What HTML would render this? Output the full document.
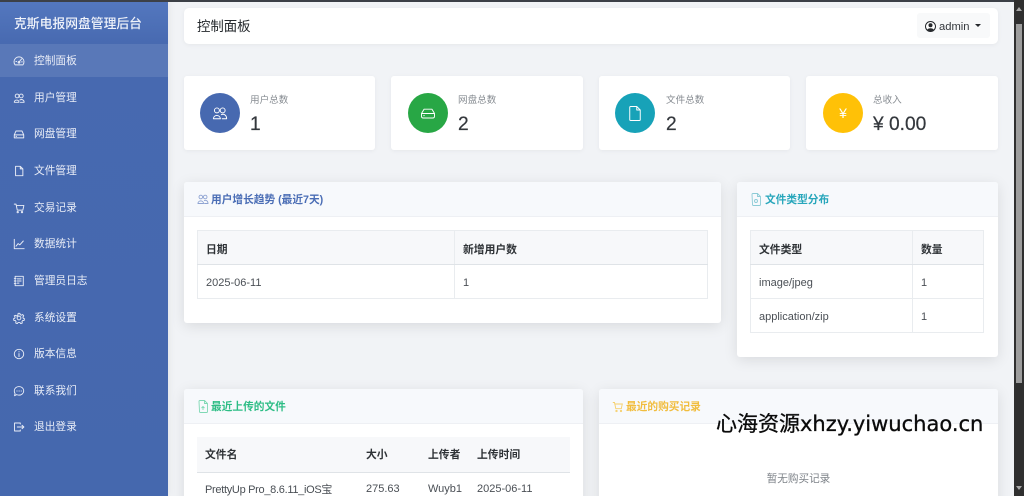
<!DOCTYPE html>
<html lang="zh">
<head>
<meta charset="utf-8">
<title>控制面板</title>
<style>
*{box-sizing:border-box}
html,body{margin:0;padding:0;width:1024px;height:496px;overflow:hidden;background:#f1f3f6}
body{font-family:"Liberation Sans","Noto Sans CJK SC",sans-serif;font-size:11.2px;color:#3d4248;position:relative}
#w{position:absolute;left:0;top:0;width:1024px;height:496px;overflow:hidden;background:#f1f3f6;filter:blur(.3px)}
.a{position:absolute}
.topline{left:0;top:0;width:1024px;height:2px;background:#3c4047;z-index:9}
.side{left:0;top:0;width:168px;height:496px;background:linear-gradient(180deg,#5478bf 0,#4769b0 45px,#4568ae 100%);box-shadow:0 0 8px rgba(0,0,0,.08)}
.brand{left:14px;top:15px;font-size:12.8px;line-height:18px;color:#f0f3fa;font-weight:500;white-space:nowrap}
.active{left:0;top:44px;width:168px;height:33px;background:rgba(255,255,255,.1)}
.nav{left:34px;font-size:10.7px;line-height:14px;color:#e9edf7;white-space:nowrap}
.ni{left:13px;width:12px;height:12px;fill:none;stroke:#e9edf7;stroke-width:1.1;stroke-linecap:round;stroke-linejoin:round}
.card{background:#fff;border-radius:3px;box-shadow:0 1px 5px rgba(0,0,0,.05)}
.panel{background:#fff;border-radius:3px;box-shadow:0 3px 14px rgba(0,0,0,.1);overflow:hidden}
.ph{left:0;top:0;right:0;height:35px;background:#f7f9fc;border-bottom:1px solid #eef0f4}
.pt{font-size:10.7px;line-height:14px;font-weight:700;white-space:nowrap}
.circ{width:40px;height:40px;border-radius:50%;top:93px}
.lab{top:95px;font-size:9.6px;line-height:12px;color:#878c92;white-space:nowrap}
.num{top:112px;font-size:19.2px;line-height:25px;color:#33373c;white-space:nowrap;-webkit-text-stroke:.2px #33373c}
table{border-collapse:collapse;position:absolute;table-layout:fixed;font-size:11px;color:#4a4f55}
td,th{border:1px solid #e9ecef;padding:2px 8px 0;text-align:left;white-space:nowrap;overflow:hidden;height:34px}
th{background:#f7f8fa;color:#2e3236;font-weight:700;font-size:10.8px;border-bottom:1px solid #dfe3e7}
.plain td,.plain th{border-left:0;border-right:0;border-top:0;padding-top:0}
.ic{fill:none;stroke:#fff;stroke-width:1.1;stroke-linecap:round;stroke-linejoin:round}
.sb{left:1014px;top:0;width:10px;height:496px;background:#2f2f2f;z-index:10}
.wm{left:716px;top:411px;font-size:21px;line-height:26px;color:#0b0b0b;white-space:nowrap;z-index:8;font-family:"DejaVu Sans","Noto Sans CJK SC",sans-serif;-webkit-text-stroke:.3px #0b0b0b}
</style>
</head>
<body>
<div id="w">
<div class="a topline"></div>

<div class="a side"></div>
<div class="a active"></div>
<div class="a brand">克斯电报网盘管理后台</div>

<svg class="a ni" style="top:55px" viewBox="0 0 14 14"><path d="M2.400 11.500A5.800 5.800 0 1 1 11.600 11.500ZM7 8.200 10 4.600M3.400 7.600h.8M10 8h.8"/><circle cx="7" cy="8.500" r="1"/></svg>
<div class="a nav" style="top:54px">控制面板</div>
<svg class="a ni" style="top:92px" viewBox="0 0 14 14"><circle cx="4.800" cy="4.600" r="2.200"/><circle cx="9.600" cy="4.600" r="2.200"/><path d="M1.500 12c0-3.500 5.500-3.500 5.500 0ZM8 9.400c2-1.300 5-.4 5 2.600H8.600"/></svg>
<div class="a nav" style="top:91px">用户管理</div>
<svg class="a ni" style="top:128px" viewBox="0 0 14 14"><path d="M1.500 8 3.500 3.500h7L12.500 8M1.500 8h11v3.500h-11ZM3.500 9.800h.6"/></svg>
<div class="a nav" style="top:127px">网盘管理</div>
<svg class="a ni" style="top:165px" viewBox="0 0 14 14"><path d="M3 1.500h5.500L11.500 4.500v8H3ZM8.500 1.500v3h3"/></svg>
<div class="a nav" style="top:164px">文件管理</div>
<svg class="a ni" style="top:202px" viewBox="0 0 14 14"><path d="M1.500 2.500h2l1.500 7h6.500l1.200-5.500H4"/><circle cx="5.500" cy="11.800" r=".8"/><circle cx="10.500" cy="11.800" r=".8"/></svg>
<div class="a nav" style="top:201px">交易记录</div>
<svg class="a ni" style="top:238px" viewBox="0 0 14 14"><path d="M1.500 1.500v11h11.500M3.500 9.500 6 6.500l2 1.500 4-4.500"/></svg>
<div class="a nav" style="top:237px">数据统计</div>
<svg class="a ni" style="top:275px" viewBox="0 0 14 14"><path d="M2.500 1.500h9.500v11H2.500ZM5 4.500h4.500M5 7h4.500M5 9.500h2M1.500 4h2M1.500 7h2M1.500 10h2"/></svg>
<div class="a nav" style="top:274px">管理员日志</div>
<svg class="a ni" style="top:312px" viewBox="0 0 14 14"><circle cx="7" cy="7" r="2.200"/><path d="M6 1.500h2l.4 1.600 1.500.6 1.400-.8 1.200 1.500-.9 1.400.3 1.400 1.500.7-.4 1.900-1.700.1-.9 1.300.5 1.600-1.800.8-1-1.300H5.900l-1 1.300-1.800-.8.500-1.600-.9-1.300-1.700-.1-.4-1.900 1.500-.7.300-1.400-.9-1.400L3.100 3.900l1.400.8 1.100-.6Z"/></svg>
<div class="a nav" style="top:311px">系统设置</div>
<svg class="a ni" style="top:348px" viewBox="0 0 14 14"><circle cx="7" cy="7" r="5.500"/><path d="M7 6.500v3.500M7 4.200v.3"/></svg>
<div class="a nav" style="top:347px">版本信息</div>
<svg class="a ni" style="top:385px" viewBox="0 0 14 14"><path d="M7 1.800c3.200 0 5.500 2.200 5.500 5s-2.300 5-5.500 5c-1 0-1.900-.2-2.600-.6L1.800 12.500l.6-2.600C1.800 9 1.500 8 1.500 6.800c0-2.800 2.300-5 5.500-5ZM4.500 7h.3M7 7h.3M9.500 7h.3"/></svg>
<div class="a nav" style="top:384px">联系我们</div>
<svg class="a ni" style="top:421px" viewBox="0 0 14 14"><path d="M8.500 3.500v-1.200H1.800v9.400h6.700v-1.200M5 7h7.500M10.500 5l2.200 2-2.200 2"/></svg>
<div class="a nav" style="top:420px">退出登录</div>

<!-- header -->
<div class="a card" style="left:184px;top:8px;width:814px;height:36px;border-radius:5px"></div>
<div class="a" style="left:197px;top:18px;font-size:13.4px;line-height:18px;color:#24282c;white-space:nowrap">控制面板</div>
<div class="a" style="left:917px;top:13px;width:73px;height:25px;background:#f8f9fa;border-radius:3px"></div>
<svg class="a" style="left:925px;top:21px;width:11px;height:11px" viewBox="0 0 11 11"><circle cx="5.500" cy="5.500" r="5" fill="#fff" stroke="#25282c" stroke-width="1"/><circle cx="5.500" cy="4.200" r="2" fill="#25282c"/><path d="M2.200 8.800C3 6.800 8 6.800 8.800 8.800 7.500 10.600 3.500 10.600 2.200 8.800Z" fill="#25282c"/></svg>
<div class="a" style="left:939px;top:20px;font-size:11.2px;line-height:14px;color:#33373c;white-space:nowrap">admin</div>
<div class="a" style="left:975px;top:24px;width:0;height:0;border-left:3.500px solid transparent;border-right:3.500px solid transparent;border-top:3.500px solid #25282c"></div>

<!-- stat cards -->
<div class="a card" style="left:184px;top:76px;width:191px;height:74px"></div>
<div class="a card" style="left:391px;top:76px;width:192px;height:74px"></div>
<div class="a card" style="left:599px;top:76px;width:191px;height:74px"></div>
<div class="a card" style="left:806px;top:76px;width:192px;height:74px"></div>

<div class="a circ" style="left:200px;background:#4769b0"></div>
<svg class="a ic" style="left:212px;top:106px;width:16px;height:15px" viewBox="0 0 18 17"><circle cx="5.500" cy="5" r="2.800"/><circle cx="12" cy="5" r="2.800"/><path d="M1.500 14.500c.2-5 7.500-5 8 0ZM10.500 9.800c2.500-1 6-.2 6 4.700h-5"/></svg>
<div class="a lab" style="left:250px">用户总数</div>
<div class="a num" style="left:250px">1</div>

<div class="a circ" style="left:408px;background:#28a745"></div>
<svg class="a ic" style="left:420px;top:107px;width:16px;height:13px" viewBox="0 0 18 15"><path d="M1.500 7.500 4.500 2.500h9l3 5M1.500 7.500h15v3.200q0 2-2 2h-11q-2 0-2-2ZM4 10h.8"/></svg>
<div class="a lab" style="left:458px">网盘总数</div>
<div class="a num" style="left:458px">2</div>

<div class="a circ" style="left:615px;background:#17a2b8"></div>
<svg class="a ic" style="left:628px;top:105px;width:14px;height:17px" viewBox="0 0 16 19"><path d="M2 2.500q0-1 1-1h7L14 5.500v11q0 1-1 1H3q-1 0-1-1ZM10 1.500v4h4"/></svg>
<div class="a lab" style="left:666px">文件总数</div>
<div class="a num" style="left:666px">2</div>

<div class="a circ" style="left:823px;background:#ffc107"></div>
<div class="a" style="left:823px;top:104px;width:40px;text-align:center;font-size:14px;line-height:18px;color:#fff">¥</div>
<div class="a lab" style="left:873px">总收入</div>
<div class="a num" style="left:873px">¥ 0.00</div>

<!-- growth panel -->
<div class="a panel" style="left:184px;top:182px;width:537px;height:141px">
  <div class="a ph"></div>
  <svg class="a" style="left:13px;top:12px;width:12px;height:11px;fill:none;stroke:#8ea3d2;stroke-width:.9" viewBox="0 0 12 11"><circle cx="3.800" cy="3" r="1.800"/><circle cx="8.200" cy="3" r="1.800"/><path d="M1 9.500c0-3.500 5.500-3.500 5.500 0ZM7 6.600c2-.8 4 .2 4 2.900H7.200"/></svg>
  <div class="a pt" style="left:27px;top:11px;color:#4a6db5">用户增长趋势 (最近7天)</div>
  <table style="left:13px;top:48px;width:510px">
    <colgroup><col style="width:257px"><col style="width:253px"></colgroup>
    <tr><th>日期</th><th>新增用户数</th></tr>
    <tr><td>2025-06-11</td><td>1</td></tr>
  </table>
</div>

<!-- file types panel -->
<div class="a panel" style="left:737px;top:182px;width:261px;height:175px">
  <div class="a ph"></div>
  <svg class="a" style="left:14px;top:11px;width:10px;height:13px;fill:none;stroke:#8ccbd6;stroke-width:.9" viewBox="0 0 10 13"><path d="M1 1.500q0-1 1-1h4.500L9.500 3.500v8q0 1-1 1h-6q-1 0-1-1ZM6.500.5v3h3"/><circle cx="5" cy="8" r="1.500"/></svg>
  <div class="a pt" style="left:28px;top:11px;color:#27a6bb">文件类型分布</div>
  <table style="left:13px;top:48px;width:233px">
    <colgroup><col style="width:162px"><col style="width:71px"></colgroup>
    <tr><th>文件类型</th><th>数量</th></tr>
    <tr><td>image/jpeg</td><td>1</td></tr>
    <tr><td>application/zip</td><td>1</td></tr>
  </table>
</div>

<!-- recent uploads -->
<div class="a panel" style="left:184px;top:389px;width:399px;height:120px">
  <div class="a ph"></div>
  <svg class="a" style="left:14px;top:11px;width:10px;height:13px;fill:none;stroke:#7fd8b4;stroke-width:.9" viewBox="0 0 10 13"><path d="M1 1.500q0-1 1-1h4.500L9.500 3.500v8q0 1-1 1h-6q-1 0-1-1ZM6.500.5v3h3M5 10V6.500M3.500 8 5 6.500 6.500 8"/></svg>
  <div class="a pt" style="left:27px;top:11px;color:#2dbd85">最近上传的文件</div>
  <table class="plain" style="left:13px;top:48px;width:373px">
    <colgroup><col style="width:161px"><col style="width:62px"><col style="width:49px"><col style="width:101px"></colgroup>
    <tr><th style="height:35px">文件名</th><th>大小</th><th>上传者</th><th>上传时间</th></tr>
    <tr><td style="letter-spacing:-.3px">PrettyUp Pro_8.6.11_iOS宝</td><td>275.63</td><td>Wuyb1</td><td>2025-06-11</td></tr>
  </table>
</div>

<!-- recent purchases -->
<div class="a panel" style="left:599px;top:389px;width:399px;height:120px">
  <div class="a ph"></div>
  <svg class="a" style="left:13px;top:12px;width:12px;height:12px;fill:none;stroke:#f6cf6a;stroke-width:.9" viewBox="0 0 12 12"><path d="M.8 1.500h1.700l1.300 6.200h5.500l1-4.700H3"/><circle cx="4.500" cy="10" r=".7"/><circle cx="9" cy="10" r=".7"/></svg>
  <div class="a pt" style="left:27px;top:11px;color:#f1bd3e">最近的购买记录</div>
  <div class="a" style="left:0;right:0;top:83px;text-align:center;font-size:10.6px;line-height:14px;color:#7d8288">暂无购买记录</div>
</div>

<div class="a wm">心海资源xhzy.yiwuchao.cn</div>

<!-- scrollbar -->
<div class="a sb"></div>
<div class="a" style="left:1016px;top:24px;width:6px;height:359px;background:#9d9d9d;z-index:11"></div>
<div class="a" style="left:1016px;top:7px;width:0;height:0;border-left:3.500px solid transparent;border-right:3.500px solid transparent;border-bottom:4px solid #a8a8a8;z-index:11"></div>
<div class="a" style="left:1016px;top:486px;width:0;height:0;border-left:3.500px solid transparent;border-right:3.500px solid transparent;border-top:4px solid #a8a8a8;z-index:11"></div>
</div>
</body>
</html>
